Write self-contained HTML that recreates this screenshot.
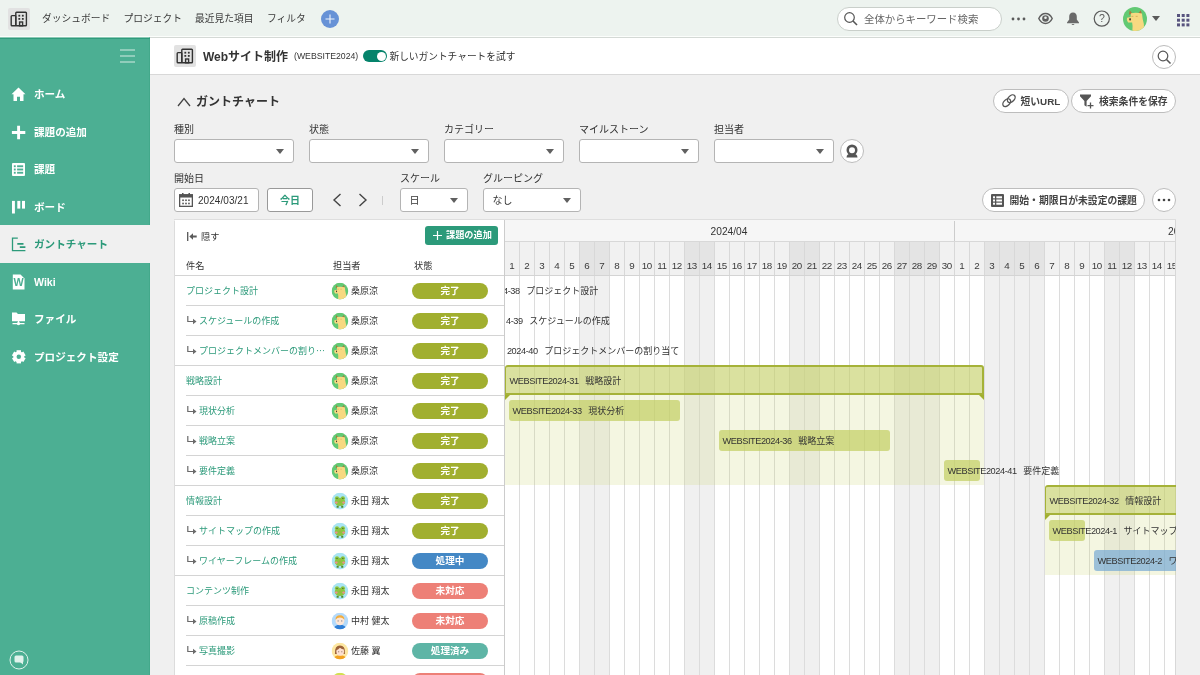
<!DOCTYPE html><html lang="ja"><head><meta charset="utf-8"><title>ガントチャート - Webサイト制作</title><style>
*{box-sizing:border-box;margin:0;padding:0}
html,body{width:1200px;height:675px;overflow:hidden}
body{background:#f0f0f0;font-family:"Liberation Sans","Noto Sans CJK JP",sans-serif;font-size:10px;color:#333;position:relative;will-change:transform}
.abs{position:absolute}
svg{display:block}
#topnav{position:absolute;left:0;top:0;width:1200px;height:38px;background:#edf3ef;border-bottom:1px solid #d4d9d5}
#topnav:after{content:"";position:absolute;left:0;top:36px;width:1200px;height:1px;background:#fbfdfb}
#topnav .nav{position:absolute;top:0;height:38px;line-height:38px;font-size:9.75px;color:#3a3a3a;white-space:nowrap}
#sidebar{position:absolute;left:0;top:37px;width:150px;height:638px;background:#4caf93;border-top:1px solid #8ccab6;border-right:1px solid #43a98b}
#sidebar:before{content:"";position:absolute;left:0;top:0;width:150px;height:1px;background:#2f9b7c}
.sitem{position:absolute;left:0;width:150px;height:37.5px;line-height:38.5px;color:#fff;font-weight:bold;font-size:10.6px;white-space:nowrap}
.sitem span{position:absolute;left:34px;top:0}
.sitem svg{position:absolute}
.sitem.active{background:#f0f0f0;color:#2c9a7a}
#projhead{position:absolute;left:150px;top:38px;width:1050px;height:37px;background:#fff;border-bottom:1px solid #d8d8d8}
.lbl{position:absolute;font-size:10px;color:#333;white-space:nowrap;line-height:14px}
.sel{position:absolute;height:24px;background:#fff;border:1px solid #b4b4b4;border-radius:3px}
.sel:after{content:"";position:absolute;right:9px;top:9px;border-left:4.5px solid transparent;border-right:4.5px solid transparent;border-top:5.5px solid #606060}
.sel span{position:absolute;left:8.5px;top:0;line-height:24px;font-size:10px}
.pill{position:absolute;height:24px;background:#fff;border:1px solid #bdbdbd;border-radius:12px;font-size:9.8px;font-weight:bold;white-space:nowrap;line-height:24px;color:#444}
#list{position:absolute;left:174px;top:220px;width:331px;height:460px;background:#fff;border:1px solid #dcdcdc;border-top-color:#fff;border-right:1px solid #c8c8c8}
#topline{position:absolute;left:174px;top:219px;width:1002px;height:1px;background:#dedede}
.row{position:absolute;left:0;width:329px;height:30px}
.row .line{position:absolute;top:0;right:0;height:1px;background:#d4d4d4}
.row .ttl{position:absolute;top:1px;line-height:30px;font-size:9px;color:#2c9a7a;white-space:nowrap;overflow:hidden;text-overflow:ellipsis}
.row .who{position:absolute;left:176px;top:1px;line-height:30px;font-size:9px;color:#333;white-space:nowrap}
.row .av{position:absolute;left:157px;top:8px;width:17px;height:17px}
.st{position:absolute;left:237px;top:8px;width:76px;height:16px;border-radius:8px;color:#fff;font-size:9.6px;font-weight:bold;text-align:center;line-height:16px}
#chart{position:absolute;left:504px;top:220px;width:672px;height:460px;overflow:hidden;background:#fff}
.bar{position:absolute;height:21px;border-radius:3px;font-size:9.2px;line-height:23px;white-space:nowrap;color:#333;padding-left:3.5px;letter-spacing:-0.42px}
.bar i{font-style:normal;margin-left:6.6px;letter-spacing:0;font-size:9px}
.day{position:absolute;top:22px;width:15px;height:33px;text-align:center;font-size:9.8px;line-height:14px;padding-top:17px;color:#3a3a3a;border-left:1px solid #d8d8d8;letter-spacing:-0.45px;text-indent:-0.4px}
</style></head><body>
<div id="topnav">
<div class="abs" style="left:8px;top:8px;width:22px;height:22px;background:#e2e2e2;border-radius:2px"><svg width="22" height="22" viewBox="0 0 22 22" style="position:absolute;left:0;top:0"><g fill="none" stroke="#333" stroke-width="1.4"><rect x="3.2" y="7.6" width="4.6" height="10.2" rx="0.8"/><rect x="7.8" y="4.2" width="10.6" height="13.600" rx="0.8"/><rect x="11.6" y="14" width="3" height="3.800"/></g><g fill="#333"><rect x="10.4" y="6.800" width="1.800" height="1.800"/><rect x="13.900" y="6.800" width="1.800" height="1.800"/><rect x="10.4" y="10" width="1.800" height="1.800"/><rect x="13.900" y="10" width="1.800" height="1.800"/></g></svg></div>
<div class="nav" style="left:42px">ダッシュボード</div>
<div class="nav" style="left:123.5px">プロジェクト</div>
<div class="nav" style="left:195px">最近見た項目</div>
<div class="nav" style="left:267px">フィルタ</div>
<div class="abs" style="left:321px;top:10px;width:18px;height:18px;border-radius:9px;background:#6792d6"><svg width="18" height="18" viewBox="0 0 18 18"><path d="M9 4.500v9M4.500 9h9" stroke="#eef3fb" stroke-width="1.100" fill="none"/></svg></div>
<div class="abs" style="left:837px;top:7px;width:165px;height:24px;border-radius:12px;background:#fff;border:1px solid #c9cfca"><svg width="16" height="16" viewBox="0 0 16 16" style="position:absolute;left:5px;top:3px"><circle cx="6.500" cy="6.500" r="4.800" fill="none" stroke="#555" stroke-width="1.200"/><path d="M10 10l4 4" stroke="#555" stroke-width="1.600"/></svg><span style="position:absolute;left:26px;top:0;line-height:23px;font-size:10.400px;color:#666;white-space:nowrap">全体からキーワード検索</span></div>
<svg class="abs" style="left:1010px;top:16px" width="18" height="6" viewBox="0 0 18 6"><circle cx="3" cy="3" r="1.400" fill="#5a5a5a"/><circle cx="8.500" cy="3" r="1.400" fill="#5a5a5a"/><circle cx="14" cy="3" r="1.400" fill="#5a5a5a"/></svg>
<svg class="abs" style="left:1038px;top:12px" width="15" height="13" viewBox="0 0 15 13"><path d="M0.800 6.500C2.500 3 5 1.500 7.500 1.500S12.500 3 14.200 6.500C12.500 10 10 11.500 7.500 11.500S2.500 10 0.800 6.500z" fill="none" stroke="#606060" stroke-width="1.500"/><circle cx="7.500" cy="6.500" r="3.300" fill="#606060"/><circle cx="7.500" cy="5.700" r="1.300" fill="#edf3ef"/></svg>
<svg class="abs" style="left:1066px;top:12px" width="14" height="14" viewBox="0 0 14 14"><path d="M7 0.500c-2.500 0-3.800 1.900-3.800 4.300v2.700L1 10.500v0.800h12v-0.800l-2.200-3V4.800c0-2.400-1.300-4.300-3.800-4.300z" fill="#6a6a6a"/><path d="M5.500 12a1.600 1.600 0 0 0 3 0z" fill="#6a6a6a"/></svg>
<svg class="abs" style="left:1093px;top:10px" width="18" height="18" viewBox="0 0 18 18"><circle cx="8.800" cy="8.600" r="7.600" fill="none" stroke="#5a5a5a" stroke-width="1.200"/><text x="8.800" y="12.300" font-size="10.500" text-anchor="middle" fill="#5a5a5a" font-family="Liberation Sans, sans-serif">?</text></svg>
<div class="abs" style="left:1123px;top:7px;width:24px;height:24px"><svg width="24" height="24" viewBox="0 0 20 20" style="transform:translate(0px,0px)"><defs><clipPath id="c1"><circle cx="10" cy="10" r="10"/></clipPath></defs><circle cx="10" cy="10" r="10" fill="#62c973"/><g clip-path="url(#c1)"><path d="M5 6.500L5.600 2.800 7.800 5.500zM12.800 5.300L14.800 2.800 15.800 6.300z" fill="#a8783e"/><path d="M6.600 5.200Q11 4.200 15.800 5.400L16.400 10Q18 14 17.500 20H7.800Q8.300 15.500 7.600 13L4.200 12.900Q2.600 11 3.400 9L6.400 8.400z" fill="#f7d981"/><ellipse cx="5.900" cy="10.300" rx="0.700" ry="1.100" fill="#4a4030"/><path d="M7 7.800h1.600M10.600 7.800h1.600" stroke="#c9a050" stroke-width="0.600"/></g></svg></div>
<div class="abs" style="left:1152px;top:16px;border-left:4.500px solid transparent;border-right:4.500px solid transparent;border-top:5.500px solid #5a5a5a"></div>
<svg class="abs" style="left:1177px;top:14px" width="13" height="13" viewBox="0 0 13 13"><rect x="0.0" y="0.0" width="3" height="3" fill="#57537e"/><rect x="0.0" y="4.7" width="3" height="3" fill="#57537e"/><rect x="0.0" y="9.4" width="3" height="3" fill="#57537e"/><rect x="4.7" y="0.0" width="3" height="3" fill="#57537e"/><rect x="4.7" y="4.7" width="3" height="3" fill="#57537e"/><rect x="4.7" y="9.4" width="3" height="3" fill="#57537e"/><rect x="9.4" y="0.0" width="3" height="3" fill="#57537e"/><rect x="9.4" y="4.7" width="3" height="3" fill="#57537e"/><rect x="9.4" y="9.4" width="3" height="3" fill="#57537e"/></svg>
</div>
<div id="sidebar">
<svg class="abs" style="left:120px;top:11px" width="15" height="14" viewBox="0 0 15 14"><path d="M0 1h15M0 7h15M0 13h15" stroke="#d3ece4" stroke-width="1.200"/></svg>
<div class="sitem" style="top:37.0px"><svg style="left:11px;top:12px" width="15" height="14.500" viewBox="0 0 15 14" preserveAspectRatio="none"><path d="M7.500 0.500L0.500 7h2v6.500h3.500V9.500h3v4h3.500V7h2z" fill="#fff"/></svg><span>ホーム</span></div>
<div class="sitem" style="top:74.5px"><svg style="left:11px;top:12px" width="15" height="15" viewBox="0 0 15 15"><path d="M7.600 0.800v13.400M0.900 7.500h13.400" stroke="#fff" stroke-width="2.900"/></svg><span>課題の追加</span></div>
<div class="sitem" style="top:112.0px"><svg style="left:12px;top:12.500px" width="13" height="13" viewBox="0 0 14 14"><rect x="0" y="0" width="14" height="14" rx="1" fill="#fff"/><g fill="#4caf93"><rect x="2" y="2.500" width="2" height="2"/><rect x="5.500" y="2.500" width="6.500" height="2"/><rect x="2" y="6" width="2" height="2"/><rect x="5.500" y="6" width="6.500" height="2"/><rect x="2" y="9.500" width="2" height="2"/><rect x="5.500" y="9.500" width="6.500" height="2"/></g></svg><span>課題</span></div>
<div class="sitem" style="top:149.5px"><svg style="left:11px;top:12px" width="15" height="14" viewBox="0 0 15 14"><rect x="1" y="0.900" width="2.900" height="12.600" fill="#fff"/><rect x="6.300" y="0.900" width="3" height="7.700" fill="#fff"/><rect x="11" y="0.900" width="3" height="7.700" fill="#fff"/></svg><span>ボード</span></div>
<div class="sitem active" style="top:187.0px"><svg style="left:11px;top:12px" width="16" height="15" viewBox="0 0 16 15"><path d="M6.800 1.200H1.500V13.600H14.400" fill="none" stroke="#2c9a7a" stroke-width="1.300"/><path d="M6.300 6.800h6.200M8.800 10.200h5.600" stroke="#2c9a7a" stroke-width="1.700"/></svg><span>ガントチャート</span></div>
<div class="sitem" style="top:224.5px"><svg style="left:12px;top:11px" width="13" height="16" viewBox="0 0 13 16"><path d="M0.800 0.500h7.700l4 4v11h-11.700z" fill="#fff"/><text x="6.700" y="12.400" font-size="10.800" font-weight="bold" text-anchor="middle" fill="#4caf93" font-family="Liberation Sans, sans-serif">W</text></svg><span>Wiki</span></div>
<div class="sitem" style="top:262.0px"><svg style="left:11px;top:12px" width="15" height="14" viewBox="0 0 15 14"><path d="M1 0.500h4.500l1.500 1.500H14V9.300H1z" fill="#fff"/><path d="M7.500 9v2.500M1.500 11.600h12" stroke="#fff" stroke-width="1.300"/><circle cx="7.500" cy="11.600" r="1.700" fill="#fff"/></svg><span>ファイル</span></div>
<div class="sitem" style="top:299.5px"><svg style="left:12px;top:12.500px" width="13.600" height="13.600" viewBox="-7 -7 14 14"><g stroke="#fff" stroke-width="4.600" stroke-linejoin="round"><path d="M0 -6.800V6.800"/><path d="M0 -6.800V6.800" transform="rotate(60)"/><path d="M0 -6.800V6.800" transform="rotate(120)"/></g><circle r="5.600" fill="#fff"/><circle r="2.300" fill="#4caf93"/></svg><span>プロジェクト設定</span></div>
<svg class="abs" style="left:9px;top:612px" width="20" height="20" viewBox="0 0 20 20"><circle cx="10" cy="10" r="9" fill="none" stroke="#e0f2ec" stroke-width="1"/><rect x="5.500" y="5.500" width="9" height="7" rx="1.500" fill="#e0f2ec"/><path d="M11 12l3 2.500V12z" fill="#e0f2ec"/></svg>
</div>
<div id="projhead">
<div class="abs" style="left:24px;top:7px;width:22px;height:22px;background:#e2e2e2;border-radius:2px"><svg width="22" height="22" viewBox="0 0 22 22" style="position:absolute;left:0;top:0"><g fill="none" stroke="#333" stroke-width="1.4"><rect x="3.2" y="7.6" width="4.6" height="10.2" rx="0.8"/><rect x="7.8" y="4.2" width="10.6" height="13.600" rx="0.8"/><rect x="11.6" y="14" width="3" height="3.800"/></g><g fill="#333"><rect x="10.4" y="6.800" width="1.800" height="1.800"/><rect x="13.900" y="6.800" width="1.800" height="1.800"/><rect x="10.4" y="10" width="1.800" height="1.800"/><rect x="13.900" y="10" width="1.800" height="1.800"/></g></svg></div>
<div class="abs" style="left:53px;top:0;line-height:39px;font-size:12px;font-weight:bold;color:#333;white-space:nowrap">Webサイト制作</div>
<div class="abs" style="left:144px;top:0;line-height:37px;font-size:8.700px;color:#333;white-space:nowrap">(WEBSITE2024)</div>
<div class="abs" style="left:213px;top:12px;width:24px;height:12px;border-radius:6px;background:#05836b"><div class="abs" style="left:13.500px;top:1.500px;width:9px;height:9px;border-radius:4.500px;background:#fff"></div></div>
<div class="abs" style="left:239.500px;top:0;line-height:37px;font-size:9.700px;color:#333;white-space:nowrap">新しいガントチャートを試す</div>
<div class="abs" style="left:1002px;top:7px;width:24px;height:24px;border-radius:12px;border:1px solid #bbb;background:#fff"><svg width="16" height="16" viewBox="0 0 16 16" style="position:absolute;left:3px;top:3px"><circle cx="7" cy="7" r="4.800" fill="none" stroke="#555" stroke-width="1.200"/><path d="M10.500 10.500l4 4" stroke="#555" stroke-width="1.600"/></svg></div>
</div>
<svg class="abs" style="left:177px;top:96.500px" width="14" height="10" viewBox="0 0 14 10"><path d="M1 9l6-7.500L13 9" fill="none" stroke="#444" stroke-width="1.300"/></svg>
<div class="abs" style="left:196px;top:93px;line-height:18px;font-size:12px;font-weight:bold;color:#333;white-space:nowrap">ガントチャート</div>
<div class="pill" style="left:993px;top:89px;width:76px"><svg width="16" height="16" viewBox="0 0 14 14" style="position:absolute;left:6.500px;top:3px"><g fill="none" stroke="#555" stroke-width="1.200"><ellipse cx="5" cy="8.500" rx="4" ry="2.600" transform="rotate(-45 5 8.500)"/><ellipse cx="9" cy="5" rx="4" ry="2.600" transform="rotate(-45 9 5)"/></g></svg><span style="position:absolute;left:26.500px">短いURL</span></div>
<div class="pill" style="left:1071px;top:89px;width:105px"><svg width="24" height="22" viewBox="0 0 24 22" style="position:absolute;left:0;top:0"><path d="M8 4.500H19V6.200L14.600 11V16.800L12.400 15.300V11L8 6.200z" fill="#555"/><path d="M18.500 12.600v6M15.500 15.600h6" stroke="#555" stroke-width="1.300"/></svg><span style="position:absolute;left:27px">検索条件を保存</span></div>
<div class="lbl" style="left:174px;top:122.500px">種別</div>
<div class="sel" style="left:174px;top:139px;width:120px"></div>
<div class="lbl" style="left:309px;top:122.500px">状態</div>
<div class="sel" style="left:309px;top:139px;width:120px"></div>
<div class="lbl" style="left:444px;top:122.500px">カテゴリー</div>
<div class="sel" style="left:444px;top:139px;width:120px"></div>
<div class="lbl" style="left:579px;top:122.500px">マイルストーン</div>
<div class="sel" style="left:579px;top:139px;width:120px"></div>
<div class="lbl" style="left:714px;top:122.500px">担当者</div>
<div class="sel" style="left:714px;top:139px;width:120px"></div>
<div class="abs" style="left:840px;top:139px;width:24px;height:24px;border-radius:12px;border:1px solid #bbb;background:#fff"><svg width="14" height="14" viewBox="0 0 14 14" style="position:absolute;left:4px;top:4px"><path d="M1.500 13.500Q1.500 9.500 7 9.500T12.500 13.500z" fill="#555"/><circle cx="7" cy="6" r="5.500" fill="#555"/><circle cx="7" cy="6.300" r="3" fill="#fff"/></svg></div>
<div class="lbl" style="left:174px;top:172px">開始日</div>
<div class="abs" style="left:174px;top:188px;width:85px;height:24px;background:#fff;border:1px solid #b4b4b4;border-radius:3px"><svg width="14" height="14" viewBox="0 0 13 13" style="position:absolute;left:4px;top:4px"><rect x="0.600" y="1.600" width="11.800" height="10.800" fill="none" stroke="#555" stroke-width="1.200"/><rect x="0.600" y="1.600" width="11.800" height="2.600" fill="#555"/><path d="M3.500 0v2.500M9.500 0v2.500" stroke="#555" stroke-width="1.400"/><g fill="#555"><rect x="3" y="6" width="1.500" height="1.500"/><rect x="5.750" y="6" width="1.500" height="1.500"/><rect x="8.500" y="6" width="1.500" height="1.500"/><rect x="3" y="9" width="1.500" height="1.500"/><rect x="5.750" y="9" width="1.500" height="1.500"/><rect x="8.500" y="9" width="1.500" height="1.500"/></g></svg><span style="position:absolute;left:23px;top:0;line-height:23px;font-size:10px;letter-spacing:0.050px;color:#333">2024/03/21</span></div>
<div class="abs" style="left:267px;top:188px;width:46px;height:24px;background:#fff;border:1px solid #999;border-radius:3px;text-align:center;line-height:24px;font-size:10px;font-weight:bold;color:#2c9a7a">今日</div>
<svg class="abs" style="left:332px;top:193px" width="10" height="14" viewBox="0 0 10 14"><path d="M8.500 1L2 7l6.500 6" fill="none" stroke="#444" stroke-width="1.400"/></svg>
<svg class="abs" style="left:358px;top:193px" width="10" height="14" viewBox="0 0 10 14"><path d="M1.500 1L8 7l-6.500 6" fill="none" stroke="#444" stroke-width="1.400"/></svg>
<div class="abs" style="left:382px;top:196px;width:1px;height:9px;background:#ccc"></div>
<div class="lbl" style="left:400px;top:172px">スケール</div>
<div class="sel" style="left:400px;top:188px;width:68px"><span>日</span></div>
<div class="lbl" style="left:483px;top:172px">グルーピング</div>
<div class="sel" style="left:483px;top:188px;width:98px"><span>なし</span></div>
<div class="pill" style="left:982px;top:188px;width:163px"><svg width="13" height="13" viewBox="0 0 13 13" style="position:absolute;left:8px;top:5px"><rect x="0" y="0" width="13" height="13" rx="1" fill="#555"/><g fill="#fff"><rect x="2" y="2.300" width="2" height="2"/><rect x="5.300" y="2.300" width="5.700" height="2"/><rect x="2" y="5.500" width="2" height="2"/><rect x="5.300" y="5.500" width="5.700" height="2"/><rect x="2" y="8.700" width="2" height="2"/><rect x="5.300" y="8.700" width="5.700" height="2"/></g></svg><span style="position:absolute;left:26.500px">開始・期限日が未設定の課題</span></div>
<div class="abs" style="left:1152px;top:188px;width:24px;height:24px;border-radius:12px;border:1px solid #bbb;background:#fff"><svg width="14" height="4" viewBox="0 0 14 4" style="position:absolute;left:4px;top:9px"><circle cx="2" cy="2" r="1.300" fill="#444"/><circle cx="7" cy="2" r="1.300" fill="#444"/><circle cx="12" cy="2" r="1.300" fill="#444"/></svg></div>
<div id="topline"></div>
<div id="list">
<svg class="abs" style="left:12px;top:11px" width="10" height="9" viewBox="0 0 10 9"><path d="M0.700 0v9" stroke="#555" stroke-width="1.300"/><path d="M2.300 4.500L6 1.200v2.300h3.700v2H6v2.300z" fill="#5a5a5a"/></svg>
<div class="abs" style="left:26px;top:9px;line-height:14px;font-size:9.200px;color:#333">隠す</div>
<div class="abs" style="left:250px;top:5px;width:73px;height:19px;border-radius:3px;background:#2c9a7a;color:#fff;font-size:9.200px;font-weight:bold;line-height:19px;white-space:nowrap"><svg width="9" height="9" viewBox="0 0 9 9" style="position:absolute;left:8px;top:5px"><path d="M4.500 0v9M0 4.500h9" stroke="#fff" stroke-width="1.200"/></svg><span style="position:absolute;left:21px">課題の追加</span></div>
<div class="abs" style="left:11px;top:38px;line-height:14px;font-size:9.200px;color:#333">件名</div>
<div class="abs" style="left:158px;top:38px;line-height:14px;font-size:9.200px;color:#333">担当者</div>
<div class="abs" style="left:239px;top:38px;line-height:14px;font-size:9.200px;color:#333">状態</div>
<div class="row" style="top:54px">
<div class="line" style="left:0px"></div>
<div class="ttl" style="left:11px;width:139px">プロジェクト設計</div>
<div class="av"><svg width="16.7" height="16.7" viewBox="0 0 20 20" style="transform:translate(-0.4px,-0.3px)"><defs><clipPath id="c2"><circle cx="10" cy="10" r="10"/></clipPath></defs><circle cx="10" cy="10" r="10" fill="#62c973"/><g clip-path="url(#c2)"><path d="M5 6.500L5.600 2.800 7.800 5.500zM12.800 5.300L14.800 2.800 15.800 6.300z" fill="#a8783e"/><path d="M6.600 5.200Q11 4.200 15.800 5.400L16.400 10Q18 14 17.500 20H7.800Q8.300 15.500 7.600 13L4.200 12.900Q2.600 11 3.400 9L6.400 8.400z" fill="#f7d981"/><ellipse cx="5.900" cy="10.300" rx="0.700" ry="1.100" fill="#4a4030"/><path d="M7 7.800h1.600M10.600 7.800h1.600" stroke="#c9a050" stroke-width="0.600"/></g></svg></div>
<div class="who">桑原涼</div>
<div class="st" style="background:#a1af2f">完了</div>
</div>
<div class="row" style="top:84px">
<div class="line" style="left:11px"></div>
<svg class="abs" style="left:12px;top:11px" width="10" height="9" viewBox="0 0 10 9"><path d="M0.800 0v5.500h6" fill="none" stroke="#6a6a6a" stroke-width="1.200"/><path d="M6 2.800L9.500 5.500 6 8.200z" fill="#6a6a6a"/></svg>
<div class="ttl" style="left:24px;width:131px">スケジュールの作成</div>
<div class="av"><svg width="16.7" height="16.7" viewBox="0 0 20 20" style="transform:translate(-0.4px,-0.3px)"><defs><clipPath id="c3"><circle cx="10" cy="10" r="10"/></clipPath></defs><circle cx="10" cy="10" r="10" fill="#62c973"/><g clip-path="url(#c3)"><path d="M5 6.500L5.600 2.800 7.800 5.500zM12.800 5.300L14.800 2.800 15.800 6.300z" fill="#a8783e"/><path d="M6.600 5.200Q11 4.200 15.800 5.400L16.400 10Q18 14 17.500 20H7.800Q8.300 15.500 7.600 13L4.200 12.900Q2.600 11 3.400 9L6.400 8.400z" fill="#f7d981"/><ellipse cx="5.900" cy="10.300" rx="0.700" ry="1.100" fill="#4a4030"/><path d="M7 7.800h1.600M10.600 7.800h1.600" stroke="#c9a050" stroke-width="0.600"/></g></svg></div>
<div class="who">桑原涼</div>
<div class="st" style="background:#a1af2f">完了</div>
</div>
<div class="row" style="top:114px">
<div class="line" style="left:11px"></div>
<svg class="abs" style="left:12px;top:11px" width="10" height="9" viewBox="0 0 10 9"><path d="M0.800 0v5.500h6" fill="none" stroke="#6a6a6a" stroke-width="1.200"/><path d="M6 2.800L9.500 5.500 6 8.200z" fill="#6a6a6a"/></svg>
<div class="ttl" style="left:24px;width:117px;text-overflow:clip">プロジェクトメンバーの割り当て</div>
<div class="ttl" style="left:141px;width:10px;text-overflow:clip;font-family:'Noto Sans CJK JP',sans-serif">…</div>
<div class="av"><svg width="16.7" height="16.7" viewBox="0 0 20 20" style="transform:translate(-0.4px,-0.3px)"><defs><clipPath id="c4"><circle cx="10" cy="10" r="10"/></clipPath></defs><circle cx="10" cy="10" r="10" fill="#62c973"/><g clip-path="url(#c4)"><path d="M5 6.500L5.600 2.800 7.800 5.500zM12.800 5.300L14.800 2.800 15.800 6.300z" fill="#a8783e"/><path d="M6.600 5.200Q11 4.200 15.800 5.400L16.400 10Q18 14 17.500 20H7.800Q8.300 15.500 7.600 13L4.200 12.900Q2.600 11 3.400 9L6.400 8.400z" fill="#f7d981"/><ellipse cx="5.900" cy="10.300" rx="0.700" ry="1.100" fill="#4a4030"/><path d="M7 7.800h1.600M10.600 7.800h1.600" stroke="#c9a050" stroke-width="0.600"/></g></svg></div>
<div class="who">桑原涼</div>
<div class="st" style="background:#a1af2f">完了</div>
</div>
<div class="row" style="top:144px">
<div class="line" style="left:0px"></div>
<div class="ttl" style="left:11px;width:139px">戦略設計</div>
<div class="av"><svg width="16.7" height="16.7" viewBox="0 0 20 20" style="transform:translate(-0.4px,-0.3px)"><defs><clipPath id="c5"><circle cx="10" cy="10" r="10"/></clipPath></defs><circle cx="10" cy="10" r="10" fill="#62c973"/><g clip-path="url(#c5)"><path d="M5 6.500L5.600 2.800 7.800 5.500zM12.800 5.300L14.800 2.800 15.800 6.300z" fill="#a8783e"/><path d="M6.600 5.200Q11 4.200 15.800 5.400L16.400 10Q18 14 17.500 20H7.800Q8.300 15.500 7.600 13L4.200 12.900Q2.600 11 3.400 9L6.400 8.400z" fill="#f7d981"/><ellipse cx="5.900" cy="10.300" rx="0.700" ry="1.100" fill="#4a4030"/><path d="M7 7.800h1.600M10.600 7.800h1.600" stroke="#c9a050" stroke-width="0.600"/></g></svg></div>
<div class="who">桑原涼</div>
<div class="st" style="background:#a1af2f">完了</div>
</div>
<div class="row" style="top:174px">
<div class="line" style="left:11px"></div>
<svg class="abs" style="left:12px;top:11px" width="10" height="9" viewBox="0 0 10 9"><path d="M0.800 0v5.500h6" fill="none" stroke="#6a6a6a" stroke-width="1.200"/><path d="M6 2.800L9.500 5.500 6 8.200z" fill="#6a6a6a"/></svg>
<div class="ttl" style="left:24px;width:131px">現状分析</div>
<div class="av"><svg width="16.7" height="16.7" viewBox="0 0 20 20" style="transform:translate(-0.4px,-0.3px)"><defs><clipPath id="c6"><circle cx="10" cy="10" r="10"/></clipPath></defs><circle cx="10" cy="10" r="10" fill="#62c973"/><g clip-path="url(#c6)"><path d="M5 6.500L5.600 2.800 7.800 5.500zM12.800 5.300L14.800 2.800 15.800 6.300z" fill="#a8783e"/><path d="M6.600 5.200Q11 4.200 15.800 5.400L16.400 10Q18 14 17.500 20H7.800Q8.300 15.500 7.600 13L4.200 12.900Q2.600 11 3.400 9L6.400 8.400z" fill="#f7d981"/><ellipse cx="5.900" cy="10.300" rx="0.700" ry="1.100" fill="#4a4030"/><path d="M7 7.800h1.600M10.600 7.800h1.600" stroke="#c9a050" stroke-width="0.600"/></g></svg></div>
<div class="who">桑原涼</div>
<div class="st" style="background:#a1af2f">完了</div>
</div>
<div class="row" style="top:204px">
<div class="line" style="left:11px"></div>
<svg class="abs" style="left:12px;top:11px" width="10" height="9" viewBox="0 0 10 9"><path d="M0.800 0v5.500h6" fill="none" stroke="#6a6a6a" stroke-width="1.200"/><path d="M6 2.800L9.500 5.500 6 8.200z" fill="#6a6a6a"/></svg>
<div class="ttl" style="left:24px;width:131px">戦略立案</div>
<div class="av"><svg width="16.7" height="16.7" viewBox="0 0 20 20" style="transform:translate(-0.4px,-0.3px)"><defs><clipPath id="c7"><circle cx="10" cy="10" r="10"/></clipPath></defs><circle cx="10" cy="10" r="10" fill="#62c973"/><g clip-path="url(#c7)"><path d="M5 6.500L5.600 2.800 7.800 5.500zM12.800 5.300L14.800 2.800 15.800 6.300z" fill="#a8783e"/><path d="M6.600 5.200Q11 4.200 15.800 5.400L16.400 10Q18 14 17.500 20H7.800Q8.300 15.500 7.600 13L4.200 12.900Q2.600 11 3.400 9L6.400 8.400z" fill="#f7d981"/><ellipse cx="5.900" cy="10.300" rx="0.700" ry="1.100" fill="#4a4030"/><path d="M7 7.800h1.600M10.600 7.800h1.600" stroke="#c9a050" stroke-width="0.600"/></g></svg></div>
<div class="who">桑原涼</div>
<div class="st" style="background:#a1af2f">完了</div>
</div>
<div class="row" style="top:234px">
<div class="line" style="left:11px"></div>
<svg class="abs" style="left:12px;top:11px" width="10" height="9" viewBox="0 0 10 9"><path d="M0.800 0v5.500h6" fill="none" stroke="#6a6a6a" stroke-width="1.200"/><path d="M6 2.800L9.500 5.500 6 8.200z" fill="#6a6a6a"/></svg>
<div class="ttl" style="left:24px;width:131px">要件定義</div>
<div class="av"><svg width="16.7" height="16.7" viewBox="0 0 20 20" style="transform:translate(-0.4px,-0.3px)"><defs><clipPath id="c8"><circle cx="10" cy="10" r="10"/></clipPath></defs><circle cx="10" cy="10" r="10" fill="#62c973"/><g clip-path="url(#c8)"><path d="M5 6.500L5.600 2.800 7.800 5.500zM12.800 5.300L14.800 2.800 15.800 6.300z" fill="#a8783e"/><path d="M6.600 5.200Q11 4.200 15.800 5.400L16.400 10Q18 14 17.500 20H7.800Q8.300 15.500 7.600 13L4.200 12.900Q2.600 11 3.400 9L6.400 8.400z" fill="#f7d981"/><ellipse cx="5.900" cy="10.300" rx="0.700" ry="1.100" fill="#4a4030"/><path d="M7 7.800h1.600M10.600 7.800h1.600" stroke="#c9a050" stroke-width="0.600"/></g></svg></div>
<div class="who">桑原涼</div>
<div class="st" style="background:#a1af2f">完了</div>
</div>
<div class="row" style="top:264px">
<div class="line" style="left:0px"></div>
<div class="ttl" style="left:11px;width:139px">情報設計</div>
<div class="av"><svg style="transform:translate(-0.4px,-0.3px)" width="16.7" height="16.7" viewBox="0 0 20 20"><circle cx="10" cy="10" r="10" fill="#a9e5f3"/><circle cx="6.500" cy="6.800" r="2.500" fill="#8cc63f"/><circle cx="13.500" cy="6.800" r="2.500" fill="#8cc63f"/><ellipse cx="10" cy="11" rx="6.300" ry="5" fill="#8cc63f"/><path d="M6 15.500h2.500v2.500H6zM11.500 15.500H14v2.500h-2.500z" fill="#4f8f2f"/><circle cx="6.500" cy="6.800" r="0.800" fill="#3d5c1e"/><circle cx="13.500" cy="6.800" r="0.800" fill="#3d5c1e"/><ellipse cx="5.600" cy="11.800" rx="1.700" ry="1.300" fill="#f08f8f"/><ellipse cx="14.400" cy="11.800" rx="1.700" ry="1.300" fill="#f08f8f"/><path d="M8.500 10.800Q10 12.300 11.500 10.800z" fill="#e0596b"/></svg></div>
<div class="who">永田 翔太</div>
<div class="st" style="background:#a1af2f">完了</div>
</div>
<div class="row" style="top:294px">
<div class="line" style="left:11px"></div>
<svg class="abs" style="left:12px;top:11px" width="10" height="9" viewBox="0 0 10 9"><path d="M0.800 0v5.500h6" fill="none" stroke="#6a6a6a" stroke-width="1.200"/><path d="M6 2.800L9.500 5.500 6 8.200z" fill="#6a6a6a"/></svg>
<div class="ttl" style="left:24px;width:131px">サイトマップの作成</div>
<div class="av"><svg style="transform:translate(-0.4px,-0.3px)" width="16.7" height="16.7" viewBox="0 0 20 20"><circle cx="10" cy="10" r="10" fill="#a9e5f3"/><circle cx="6.500" cy="6.800" r="2.500" fill="#8cc63f"/><circle cx="13.500" cy="6.800" r="2.500" fill="#8cc63f"/><ellipse cx="10" cy="11" rx="6.300" ry="5" fill="#8cc63f"/><path d="M6 15.500h2.500v2.500H6zM11.500 15.500H14v2.500h-2.500z" fill="#4f8f2f"/><circle cx="6.500" cy="6.800" r="0.800" fill="#3d5c1e"/><circle cx="13.500" cy="6.800" r="0.800" fill="#3d5c1e"/><ellipse cx="5.600" cy="11.800" rx="1.700" ry="1.300" fill="#f08f8f"/><ellipse cx="14.400" cy="11.800" rx="1.700" ry="1.300" fill="#f08f8f"/><path d="M8.500 10.800Q10 12.300 11.500 10.800z" fill="#e0596b"/></svg></div>
<div class="who">永田 翔太</div>
<div class="st" style="background:#a1af2f">完了</div>
</div>
<div class="row" style="top:324px">
<div class="line" style="left:11px"></div>
<svg class="abs" style="left:12px;top:11px" width="10" height="9" viewBox="0 0 10 9"><path d="M0.800 0v5.500h6" fill="none" stroke="#6a6a6a" stroke-width="1.200"/><path d="M6 2.800L9.500 5.500 6 8.200z" fill="#6a6a6a"/></svg>
<div class="ttl" style="left:24px;width:131px">ワイヤーフレームの作成</div>
<div class="av"><svg style="transform:translate(-0.4px,-0.3px)" width="16.7" height="16.7" viewBox="0 0 20 20"><circle cx="10" cy="10" r="10" fill="#a9e5f3"/><circle cx="6.500" cy="6.800" r="2.500" fill="#8cc63f"/><circle cx="13.500" cy="6.800" r="2.500" fill="#8cc63f"/><ellipse cx="10" cy="11" rx="6.300" ry="5" fill="#8cc63f"/><path d="M6 15.500h2.500v2.500H6zM11.500 15.500H14v2.500h-2.500z" fill="#4f8f2f"/><circle cx="6.500" cy="6.800" r="0.800" fill="#3d5c1e"/><circle cx="13.500" cy="6.800" r="0.800" fill="#3d5c1e"/><ellipse cx="5.600" cy="11.800" rx="1.700" ry="1.300" fill="#f08f8f"/><ellipse cx="14.400" cy="11.800" rx="1.700" ry="1.300" fill="#f08f8f"/><path d="M8.500 10.800Q10 12.300 11.500 10.800z" fill="#e0596b"/></svg></div>
<div class="who">永田 翔太</div>
<div class="st" style="background:#4488c5">処理中</div>
</div>
<div class="row" style="top:354px">
<div class="line" style="left:0px"></div>
<div class="ttl" style="left:11px;width:139px">コンテンツ制作</div>
<div class="av"><svg style="transform:translate(-0.4px,-0.3px)" width="16.7" height="16.7" viewBox="0 0 20 20"><circle cx="10" cy="10" r="10" fill="#a9e5f3"/><circle cx="6.500" cy="6.800" r="2.500" fill="#8cc63f"/><circle cx="13.500" cy="6.800" r="2.500" fill="#8cc63f"/><ellipse cx="10" cy="11" rx="6.300" ry="5" fill="#8cc63f"/><path d="M6 15.500h2.500v2.500H6zM11.500 15.500H14v2.500h-2.500z" fill="#4f8f2f"/><circle cx="6.500" cy="6.800" r="0.800" fill="#3d5c1e"/><circle cx="13.500" cy="6.800" r="0.800" fill="#3d5c1e"/><ellipse cx="5.600" cy="11.800" rx="1.700" ry="1.300" fill="#f08f8f"/><ellipse cx="14.400" cy="11.800" rx="1.700" ry="1.300" fill="#f08f8f"/><path d="M8.500 10.800Q10 12.300 11.500 10.800z" fill="#e0596b"/></svg></div>
<div class="who">永田 翔太</div>
<div class="st" style="background:#ed8077">未対応</div>
</div>
<div class="row" style="top:384px">
<div class="line" style="left:11px"></div>
<svg class="abs" style="left:12px;top:11px" width="10" height="9" viewBox="0 0 10 9"><path d="M0.800 0v5.500h6" fill="none" stroke="#6a6a6a" stroke-width="1.200"/><path d="M6 2.800L9.500 5.500 6 8.200z" fill="#6a6a6a"/></svg>
<div class="ttl" style="left:24px;width:131px">原稿作成</div>
<div class="av"><svg style="transform:translate(-0.4px,-0.3px)" width="16.7" height="16.7" viewBox="0 0 20 20"><defs><clipPath id="c13"><circle cx="10" cy="10" r="10"/></clipPath></defs><circle cx="10" cy="10" r="10" fill="#b3dafb"/><g clip-path="url(#c13)"><path d="M2.500 20Q3 14.500 10 14.500T17.500 20z" fill="#2f7fd6"/><ellipse cx="10" cy="9.500" rx="5.300" ry="5.600" fill="#fde6d6"/><path d="M4.700 8.500Q4.500 3 10 3T15.300 8.500Q13 5.800 10 5.800T4.700 8.500z" fill="#f3ad3d"/><circle cx="7.800" cy="9.800" r="0.700" fill="#6b7a8a"/><circle cx="12.200" cy="9.800" r="0.700" fill="#6b7a8a"/></g></svg></div>
<div class="who">中村 健太</div>
<div class="st" style="background:#ed8077">未対応</div>
</div>
<div class="row" style="top:414px">
<div class="line" style="left:11px"></div>
<svg class="abs" style="left:12px;top:11px" width="10" height="9" viewBox="0 0 10 9"><path d="M0.800 0v5.500h6" fill="none" stroke="#6a6a6a" stroke-width="1.200"/><path d="M6 2.800L9.500 5.500 6 8.200z" fill="#6a6a6a"/></svg>
<div class="ttl" style="left:24px;width:131px">写真撮影</div>
<div class="av"><svg style="transform:translate(-0.4px,-0.3px)" width="16.7" height="16.7" viewBox="0 0 20 20"><defs><clipPath id="c14"><circle cx="10" cy="10" r="10"/></clipPath></defs><circle cx="10" cy="10" r="10" fill="#fde7a1"/><g clip-path="url(#c14)"><path d="M4 13.500Q3.500 3.500 10 3.500T16 13.500z" fill="#9c6238"/><path d="M2.500 20Q3 15 10 15T17.500 20z" fill="#f3a21f"/><ellipse cx="10.300" cy="10.500" rx="4.600" ry="5" fill="#fde0d0"/><path d="M5 9Q5.500 4.500 10.500 4.800T15.300 8Q12 8 10 6Q8 8.500 5 9z" fill="#9c6238"/><circle cx="8.500" cy="10.800" r="0.650" fill="#7a5a4a"/><circle cx="12.300" cy="10.800" r="0.650" fill="#7a5a4a"/></g></svg></div>
<div class="who">佐藤 翼</div>
<div class="st" style="background:#5eb5a6">処理済み</div>
</div>
<div class="row" style="top:444px">
<div class="line" style="left:11px"></div>
<svg class="abs" style="left:12px;top:11px" width="10" height="9" viewBox="0 0 10 9"><path d="M0.800 0v5.500h6" fill="none" stroke="#6a6a6a" stroke-width="1.200"/><path d="M6 2.800L9.500 5.500 6 8.200z" fill="#6a6a6a"/></svg>
<div class="ttl" style="left:24px;width:131px">動画制作</div>
<div class="av"><svg width="16.7" height="16.7" viewBox="0 0 20 20" style="transform:translate(-0.4px,-0.3px)"><circle cx="10" cy="10" r="10" fill="#d3df52"/></svg></div>
<div class="who">山本 美咲</div>
<div class="st" style="background:#ed8077">未対応</div>
</div>
</div>
<div id="chart">
<div class="abs" style="left:0;top:0;width:672px;height:22px;background:#f6f6f6;border-bottom:1px solid #d8d8d8"></div>
<div class="abs" style="left:0;top:1px;width:450px;height:20px;text-align:center;line-height:21px;font-size:10.200px;color:#333">2024/04</div>
<div class="abs" style="left:450px;top:1px;width:1px;height:20px;background:#ccc"></div>
<div class="abs" style="left:450px;top:1px;width:465px;height:20px;text-align:center;line-height:21px;font-size:10.200px;color:#333">2024/05</div>
<div class="day" style="left:0px;background:#f1f1f1">1</div>
<div class="abs" style="left:0px;top:56px;width:15px;height:420px;border-left:1px solid #dcdcdc;background:#fff"></div>
<div class="day" style="left:15px;background:#f1f1f1">2</div>
<div class="abs" style="left:15px;top:56px;width:15px;height:420px;border-left:1px solid #dcdcdc;background:#fff"></div>
<div class="day" style="left:30px;background:#f1f1f1">3</div>
<div class="abs" style="left:30px;top:56px;width:15px;height:420px;border-left:1px solid #dcdcdc;background:#fff"></div>
<div class="day" style="left:45px;background:#f1f1f1">4</div>
<div class="abs" style="left:45px;top:56px;width:15px;height:420px;border-left:1px solid #dcdcdc;background:#fff"></div>
<div class="day" style="left:60px;background:#f1f1f1">5</div>
<div class="abs" style="left:60px;top:56px;width:15px;height:420px;border-left:1px solid #dcdcdc;background:#fff"></div>
<div class="day" style="left:75px;background:#e4e4e4">6</div>
<div class="abs" style="left:75px;top:56px;width:15px;height:420px;border-left:1px solid #dcdcdc;background:#f0f0f0"></div>
<div class="day" style="left:90px;background:#e4e4e4">7</div>
<div class="abs" style="left:90px;top:56px;width:15px;height:420px;border-left:1px solid #dcdcdc;background:#f0f0f0"></div>
<div class="day" style="left:105px;background:#f1f1f1">8</div>
<div class="abs" style="left:105px;top:56px;width:15px;height:420px;border-left:1px solid #dcdcdc;background:#fff"></div>
<div class="day" style="left:120px;background:#f1f1f1">9</div>
<div class="abs" style="left:120px;top:56px;width:15px;height:420px;border-left:1px solid #dcdcdc;background:#fff"></div>
<div class="day" style="left:135px;background:#f1f1f1">10</div>
<div class="abs" style="left:135px;top:56px;width:15px;height:420px;border-left:1px solid #dcdcdc;background:#fff"></div>
<div class="day" style="left:150px;background:#f1f1f1">11</div>
<div class="abs" style="left:150px;top:56px;width:15px;height:420px;border-left:1px solid #dcdcdc;background:#fff"></div>
<div class="day" style="left:165px;background:#f1f1f1">12</div>
<div class="abs" style="left:165px;top:56px;width:15px;height:420px;border-left:1px solid #dcdcdc;background:#fff"></div>
<div class="day" style="left:180px;background:#e4e4e4">13</div>
<div class="abs" style="left:180px;top:56px;width:15px;height:420px;border-left:1px solid #dcdcdc;background:#f0f0f0"></div>
<div class="day" style="left:195px;background:#e4e4e4">14</div>
<div class="abs" style="left:195px;top:56px;width:15px;height:420px;border-left:1px solid #dcdcdc;background:#f0f0f0"></div>
<div class="day" style="left:210px;background:#f1f1f1">15</div>
<div class="abs" style="left:210px;top:56px;width:15px;height:420px;border-left:1px solid #dcdcdc;background:#fff"></div>
<div class="day" style="left:225px;background:#f1f1f1">16</div>
<div class="abs" style="left:225px;top:56px;width:15px;height:420px;border-left:1px solid #dcdcdc;background:#fff"></div>
<div class="day" style="left:240px;background:#f1f1f1">17</div>
<div class="abs" style="left:240px;top:56px;width:15px;height:420px;border-left:1px solid #dcdcdc;background:#fff"></div>
<div class="day" style="left:255px;background:#f1f1f1">18</div>
<div class="abs" style="left:255px;top:56px;width:15px;height:420px;border-left:1px solid #dcdcdc;background:#fff"></div>
<div class="day" style="left:270px;background:#f1f1f1">19</div>
<div class="abs" style="left:270px;top:56px;width:15px;height:420px;border-left:1px solid #dcdcdc;background:#fff"></div>
<div class="day" style="left:285px;background:#e4e4e4">20</div>
<div class="abs" style="left:285px;top:56px;width:15px;height:420px;border-left:1px solid #dcdcdc;background:#f0f0f0"></div>
<div class="day" style="left:300px;background:#e4e4e4">21</div>
<div class="abs" style="left:300px;top:56px;width:15px;height:420px;border-left:1px solid #dcdcdc;background:#f0f0f0"></div>
<div class="day" style="left:315px;background:#f1f1f1">22</div>
<div class="abs" style="left:315px;top:56px;width:15px;height:420px;border-left:1px solid #dcdcdc;background:#fff"></div>
<div class="day" style="left:330px;background:#f1f1f1">23</div>
<div class="abs" style="left:330px;top:56px;width:15px;height:420px;border-left:1px solid #dcdcdc;background:#fff"></div>
<div class="day" style="left:345px;background:#f1f1f1">24</div>
<div class="abs" style="left:345px;top:56px;width:15px;height:420px;border-left:1px solid #dcdcdc;background:#fff"></div>
<div class="day" style="left:360px;background:#f1f1f1">25</div>
<div class="abs" style="left:360px;top:56px;width:15px;height:420px;border-left:1px solid #dcdcdc;background:#fff"></div>
<div class="day" style="left:375px;background:#f1f1f1">26</div>
<div class="abs" style="left:375px;top:56px;width:15px;height:420px;border-left:1px solid #dcdcdc;background:#fff"></div>
<div class="day" style="left:390px;background:#e4e4e4">27</div>
<div class="abs" style="left:390px;top:56px;width:15px;height:420px;border-left:1px solid #dcdcdc;background:#f0f0f0"></div>
<div class="day" style="left:405px;background:#e4e4e4">28</div>
<div class="abs" style="left:405px;top:56px;width:15px;height:420px;border-left:1px solid #dcdcdc;background:#f0f0f0"></div>
<div class="day" style="left:420px;background:#e4e4e4">29</div>
<div class="abs" style="left:420px;top:56px;width:15px;height:420px;border-left:1px solid #dcdcdc;background:#f0f0f0"></div>
<div class="day" style="left:435px;background:#f1f1f1">30</div>
<div class="abs" style="left:435px;top:56px;width:15px;height:420px;border-left:1px solid #dcdcdc;background:#fff"></div>
<div class="day" style="left:450px;background:#f1f1f1">1</div>
<div class="abs" style="left:450px;top:56px;width:15px;height:420px;border-left:1px solid #dcdcdc;background:#fff"></div>
<div class="day" style="left:465px;background:#f1f1f1">2</div>
<div class="abs" style="left:465px;top:56px;width:15px;height:420px;border-left:1px solid #dcdcdc;background:#fff"></div>
<div class="day" style="left:480px;background:#e4e4e4">3</div>
<div class="abs" style="left:480px;top:56px;width:15px;height:420px;border-left:1px solid #dcdcdc;background:#f0f0f0"></div>
<div class="day" style="left:495px;background:#e4e4e4">4</div>
<div class="abs" style="left:495px;top:56px;width:15px;height:420px;border-left:1px solid #dcdcdc;background:#f0f0f0"></div>
<div class="day" style="left:510px;background:#e4e4e4">5</div>
<div class="abs" style="left:510px;top:56px;width:15px;height:420px;border-left:1px solid #dcdcdc;background:#f0f0f0"></div>
<div class="day" style="left:525px;background:#e4e4e4">6</div>
<div class="abs" style="left:525px;top:56px;width:15px;height:420px;border-left:1px solid #dcdcdc;background:#f0f0f0"></div>
<div class="day" style="left:540px;background:#f1f1f1">7</div>
<div class="abs" style="left:540px;top:56px;width:15px;height:420px;border-left:1px solid #dcdcdc;background:#fff"></div>
<div class="day" style="left:555px;background:#f1f1f1">8</div>
<div class="abs" style="left:555px;top:56px;width:15px;height:420px;border-left:1px solid #dcdcdc;background:#fff"></div>
<div class="day" style="left:570px;background:#f1f1f1">9</div>
<div class="abs" style="left:570px;top:56px;width:15px;height:420px;border-left:1px solid #dcdcdc;background:#fff"></div>
<div class="day" style="left:585px;background:#f1f1f1">10</div>
<div class="abs" style="left:585px;top:56px;width:15px;height:420px;border-left:1px solid #dcdcdc;background:#fff"></div>
<div class="day" style="left:600px;background:#e4e4e4">11</div>
<div class="abs" style="left:600px;top:56px;width:15px;height:420px;border-left:1px solid #dcdcdc;background:#f0f0f0"></div>
<div class="day" style="left:615px;background:#e4e4e4">12</div>
<div class="abs" style="left:615px;top:56px;width:15px;height:420px;border-left:1px solid #dcdcdc;background:#f0f0f0"></div>
<div class="day" style="left:630px;background:#f1f1f1">13</div>
<div class="abs" style="left:630px;top:56px;width:15px;height:420px;border-left:1px solid #dcdcdc;background:#fff"></div>
<div class="day" style="left:645px;background:#f1f1f1">14</div>
<div class="abs" style="left:645px;top:56px;width:15px;height:420px;border-left:1px solid #dcdcdc;background:#fff"></div>
<div class="day" style="left:660px;background:#f1f1f1">15</div>
<div class="abs" style="left:660px;top:56px;width:15px;height:420px;border-left:1px solid #dcdcdc;background:#fff"></div>
<div class="abs" style="left:0;top:55px;width:672px;height:1px;background:#d4d4d4"></div>
<div class="abs" style="left:0;top:0;width:1px;height:460px;background:#ccc"></div>
<div class="abs" style="left:671px;top:0;width:1px;height:460px;background:#d8d8d8"></div>
<div class="abs" style="left:1px;top:175px;width:479px;height:90px;background:rgba(205,214,120,0.22)"></div>
<div class="abs" style="left:541px;top:295px;width:140px;height:60px;background:rgba(205,214,120,0.22)"></div>
<div class="abs" style="left:1px;top:60px;width:600px;height:24px;overflow:hidden"><div class="bar" style="left:-58px;top:0;background:none">WEBSITE2024-38<i>プロジェクト設計</i></div></div>
<div class="abs" style="left:2px;top:90px;width:600px;height:24px;overflow:hidden"><div class="bar" style="left:-56px;top:0;background:none">WEBSITE2024-39<i>スケジュールの作成</i></div></div>
<div class="abs" style="left:3px;top:120px;width:600px;height:24px;overflow:hidden"><div class="bar" style="left:-42px;top:0;background:none">WEBSITE2024-40<i>プロジェクトメンバーの割り当て</i></div></div>
<div class="abs" style="left:1px;top:145px;width:479px;height:30px;background:rgba(196,206,100,0.62);border:2px solid #a5b238;border-left-width:1px;border-radius:3px 3px 0 0;"></div>
<div class="abs" style="left:1px;top:175px;border-top:5px solid #a1af2f;border-right:5px solid transparent"></div>
<div class="abs" style="left:475px;top:175px;border-top:5px solid #a1af2f;border-left:5px solid transparent"></div>
<div class="bar" style="left:2px;top:150px;background:none">WEBSITE2024-31<i>戦略設計</i></div>
<div class="abs" style="left:541px;top:265px;width:140px;height:30px;background:rgba(196,206,100,0.62);border:2px solid #a5b238;border-left-width:1px;border-radius:3px 3px 0 0;border-right:none;border-radius:3px 0 0 0;"></div>
<div class="abs" style="left:541px;top:295px;border-top:5px solid #a1af2f;border-right:5px solid transparent"></div>
<div class="bar" style="left:542px;top:270px;background:none">WEBSITE2024-32<i>情報設計</i></div>
<div class="bar" style="left:5px;top:180px;width:171px;background:rgba(196,206,100,0.72)">WEBSITE2024-33<i>現状分析</i></div>
<div class="bar" style="left:215px;top:210px;width:171px;background:rgba(196,206,100,0.72)">WEBSITE2024-36<i>戦略立案</i></div>
<div class="bar" style="left:440px;top:240px;width:36px;background:rgba(196,206,100,0.72)">WEBSITE2024-41<i>要件定義</i></div>
<div class="bar" style="left:545px;top:300px;width:36px;background:rgba(196,206,100,0.72)">WEBSITE2024-1<i>サイトマップの作成</i></div>
<div class="bar" style="left:590px;top:330px;width:100px;background:rgba(118,170,212,0.70)">WEBSITE2024-2<i>ワイヤーフレームの作成</i></div>
</div>
</body></html>
